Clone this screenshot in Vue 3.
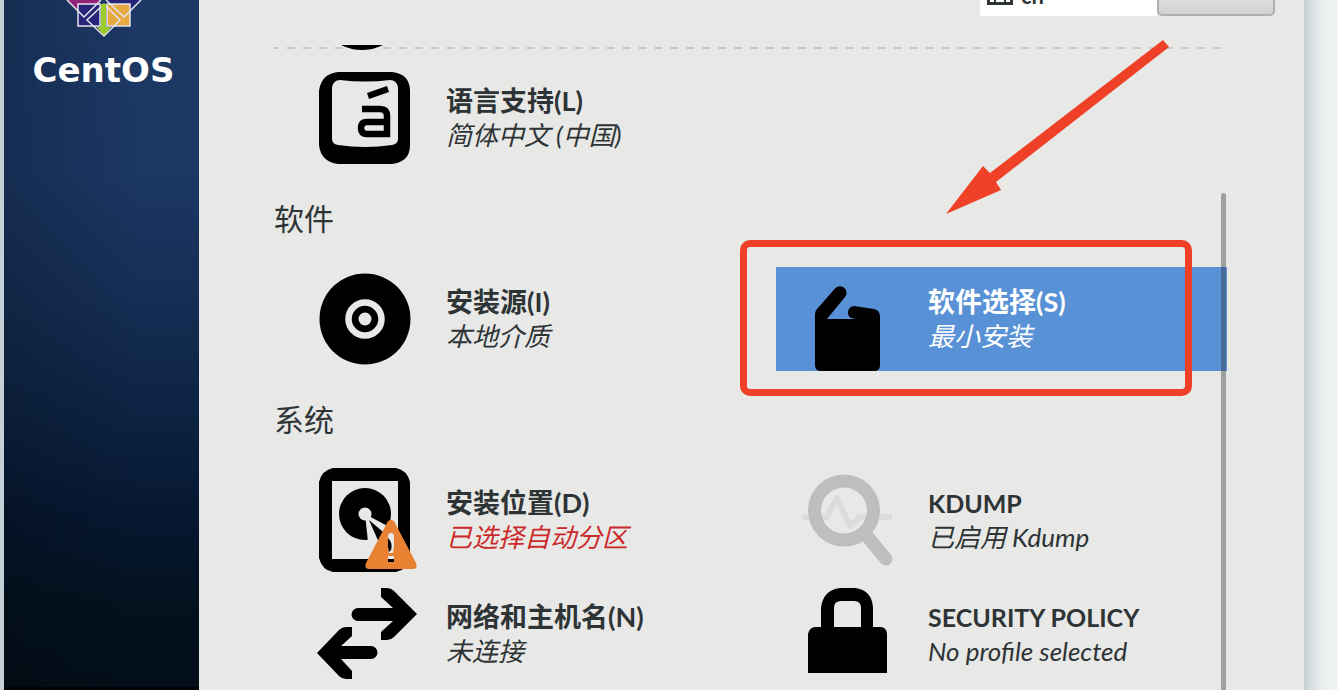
<script setup>
const groups = [
  {
    heading: '',
    items: [{ icon: 'keycap', title: '语言支持(L)', status: '简体中文 (中国)' }],
  },
  {
    heading: '软件',
    items: [
      { icon: 'disc', title: '安装源(I)', status: '本地介质' },
      { icon: 'package', title: '软件选择(S)', status: '最小安装', selected: true },
    ],
  },
  {
    heading: '系统',
    items: [
      { icon: 'disk', title: '安装位置(D)', status: '已选择自动分区', warning: true },
      { icon: 'kdump', title: 'KDUMP', status: '已启用 Kdump', latin: true },
      { icon: 'network', title: '网络和主机名(N)', status: '未连接' },
      { icon: 'lock', title: 'SECURITY POLICY', status: 'No profile selected', latin: true },
    ],
  },
]
</script>

<template>
  <div class="page">
    <aside class="sidebar">
      <svg class="logo" width="76" height="38" viewBox="66 0 76 38" aria-hidden="true">
        <path d="M67 0 84 17 101 0Z" fill="#932279" />
        <path d="M106 0 124 17 141 0Z" fill="#262577" />
        <rect x="78" y="4" width="22" height="22" fill="#262577" />
        <rect x="107" y="4" width="23" height="22" fill="#e6a93f" />
        <path d="M97 27H111L104 36Z" fill="#9ccd2a" />
        <g fill="none" stroke="#e3e3ee" stroke-width="1.5">
          <path d="M67 0 84 17 101 0M106 0 124 17 141 0" />
          <rect x="78" y="4" width="22" height="22" />
          <rect x="107" y="4" width="23" height="22" />
          <path d="M104 4 87 20 104 36 120 20Z" />
        </g>
        <path d="M101 4H106V31H101Z" fill="#9ccd2a" />
      </svg>
      <div class="brand">CentOS</div>
    </aside>

    <main class="main">
      <header class="top">
        <div class="layout-indicator">
          <svg width="26" height="20" viewBox="0 0 26 20" aria-hidden="true">
            <rect x="1.5" y="1.5" width="23" height="17" fill="none" stroke="#2e3436" stroke-width="3" />
            <path d="M5 7H21M5 11H21" stroke="#2e3436" stroke-width="2" stroke-dasharray="3 2" />
            <path d="M8 12V18M18 12V18" stroke="#2e3436" stroke-width="2" />
          </svg>
          <span>cn</span>
        </div>
        <button class="help" type="button" aria-label="帮助"></button>
      </header>

      <div class="hub">
        <hr class="divider" />
        <div class="cut-row">
          <svg width="104" height="92" viewBox="0 0 104 92" aria-hidden="true">
            <circle cx="52" cy="46" r="46" />
          </svg>
        </div>

        <section v-for="g in groups" :key="g.heading">
          <h2 v-if="g.heading">{{ g.heading }}</h2>
          <div class="grid">
            <button
              v-for="it in g.items"
              :key="it.title"
              type="button"
              class="spoke"
              :class="{ selected: it.selected }"
            >
              <svg class="icon" viewBox="0 0 104 104" aria-hidden="true">
                <g v-if="it.icon === 'keycap'">
                  <path
                    fill-rule="evenodd"
                    d="M25 6H79Q97 8 97 25V79Q97 96 79 98H25Q8 96 6 79V25Q8 8 25 6ZM27 14Q20 14 19 22V73Q19 78 25 79Q52 83 79 79Q85 78 85 73V22Q84 14 77 14Q52 17 27 14Z"
                  />
                  <path
                    d="M49 43H67Q74 43 74 50V68H54Q48 68 48 62Q48 56 54 56H74"
                    fill="none"
                    stroke="#000"
                    stroke-width="6.5"
                  />
                  <path d="M54 27 74 20 76 26 56 33Z" />
                </g>
                <g v-else-if="it.icon === 'disc'">
                  <circle cx="52" cy="52" r="45.5" />
                  <circle cx="52" cy="52" r="16.5" fill="none" stroke="#e8e8e6" stroke-width="6.5" />
                  <circle cx="52" cy="52" r="6.5" fill="#e8e8e6" />
                </g>
                <g v-else-if="it.icon === 'package'">
                  <path
                    d="M20 47Q20 44 22 42L40 21.5A6.5 6.5 0 0 1 50 30L32 52H61L56 51A6.5 6.5 0 0 1 59 39L79 42Q85 43 85 50V98Q85 104 79 104H26Q20 104 20 98Z"
                  />
                </g>
                <g v-else-if="it.icon === 'disk'">
                  <path
                    fill-rule="evenodd"
                    d="M20 0H83Q94 2 97 14V90Q94 102 83 104H20Q9 102 6 90V14Q9 2 20 0ZM19 13V91H85V13Z"
                  />
                  <circle cx="52" cy="46" r="26" />
                  <path d="M52 46 55 74 74 76 82 62Z" fill="#e8e8e6" />
                  <path d="M56 52 67 77Q76 86 80 80Q81 74 76 69Z" />
                  <circle cx="52" cy="46" r="6.5" fill="#e8e8e6" />
                  <path d="M78 52Q81 52 82 55L103 95Q105 101 100 101H56Q51 101 53 95L74 55Q75 52 78 52Z" fill="#e98132" />
                  <path d="M75 68Q75 65 78 65T81 68V79L80 85H76L75 79Z" fill="#e8e8e6" />
                  <path d="M75 70Q80 75 78 82L76 84 75 79Z" />
                  <path d="M75 88H81V92H75Z" fill="#e8e8e6" />
                  <path d="M75 91H81V94H75Z" />
                </g>
                <g v-else-if="it.icon === 'kdump'">
                  <path
                    d="M7 49H32L42 30 55 58 65 49H97"
                    fill="none"
                    stroke="#dcdcda"
                    stroke-width="6"
                    stroke-linejoin="round"
                  />
                  <circle cx="49" cy="42.5" r="29.5" fill="none" stroke="#bebebe" stroke-width="13" />
                  <path d="M71 67 91 91" stroke="#bebebe" stroke-width="13" stroke-linecap="round" />
                </g>
                <g v-else-if="it.icon === 'network'">
                  <path
                    d="M68 6H74Q78 6 81 9L104 32 81 55Q78 58 74 58H68V50L80 39H45A6.5 6.5 0 0 1 45 26H80L68 15Z"
                  />
                  <path
                    d="M39 45H33Q29 45 26 48L4 71 26 94Q29 97 33 97H39V89L28 77H58A6.5 6.5 0 0 0 58 64H28L39 54Z"
                  />
                </g>
                <path
                  v-else
                  fill-rule="evenodd"
                  d="M26 45V26Q28 8 45 6H60Q77 8 78 26V45H86Q92 46 92 52V91H13V52Q14 46 20 45ZM39 45H66V26Q66 19 59 19H46Q39 19 39 26Z"
                />
              </svg>
              <span class="label">
                <strong :class="{ latin: it.latin }">{{ it.title }}</strong>
                <em :class="{ warning: it.warning }">{{ it.status }}</em>
              </span>
            </button>
          </div>
        </section>
        <div class="scroll-thumb"></div>
      </div>

      <div class="callout"></div>
      <svg class="arrow" width="224" height="176" viewBox="0 0 224 176" aria-hidden="true">
        <path d="M217 1 223 8 50 143 55 151 0 175 37 127 44 134Z" fill="#ee4128" />
      </svg>
    </main>
  </div>
</template>

<style>
body {
  overflow: hidden;
}
</style>

<style scoped>
.page {
  display: flex;
  height: 100vh;
  padding: 0 34px 0 4px;
  box-sizing: border-box;
  overflow: hidden;
  background: linear-gradient(to left, #f1f3f3 0, #eef1f1 14px, #dbe2e4 25px, #c4d0d5 34px, #c4d0d5 100%);
  font-family: Lato, 'Noto Sans CJK SC', sans-serif;
  color: #2e3436;
}
.sidebar {
  flex: none;
  width: 195px;
  padding-left: 4px;
  box-sizing: border-box;
  display: flex;
  flex-direction: column;
  align-items: center;
  border-bottom: 3px solid #000408;
  background:
    linear-gradient(to right, rgba(0, 0, 0, 0.18), transparent 70%),
    linear-gradient(#1c3864 0, #1b3764 25%, #152e54 43%, #0d2343 60%, #061731 75%, #03121f 88%, #020e19 100%);
}
.logo {
  display: block;
}
.brand {
  font: 700 34px/64px 'DejaVu Sans', sans-serif;
  color: #fff;
}
.main {
  flex: 1;
  position: relative;
  display: flex;
  flex-direction: column;
  min-width: 0;
  padding: 0 77px 0 75px;
  background: #e8e8e6;
}
.top {
  flex: none;
  display: flex;
  justify-content: flex-end;
  align-items: flex-end;
  height: 45px;
  padding-bottom: 29px;
  margin-right: -48px;
  box-sizing: border-box;
}
.layout-indicator {
  display: flex;
  align-items: flex-end;
  gap: 8px;
  width: 177px;
  height: 46px;
  padding: 0 7px 11px;
  box-sizing: border-box;
  background: #fff;
  font-size: 22px;
  font-weight: 700;
  line-height: 18px;
}
.help {
  width: 118px;
  height: 46px;
  border: 2px solid #afafad;
  border-radius: 5px;
  background: linear-gradient(#f0f0ee, #d2d2d0);
}
.hub {
  flex: 1;
  position: relative;
  min-height: 0;
  overflow: hidden;
}
.divider {
  height: 2px;
  margin: 2px -3px -4px;
  border: 0;
  background: linear-gradient(to right, #c9c9c7 8px, transparent 8px) 0 0 / 16px 2px round;
}
.cut-row {
  display: flex;
  align-items: flex-end;
  height: 11px;
  padding: 0 0 6px 36px;
  margin-bottom: 10px;
  box-sizing: border-box;
}
.cut-row svg {
  position: relative;
}
h2 {
  margin: 28px 0 29px;
  font-size: 30px;
  font-weight: 400;
  line-height: 40px;
}
.grid {
  display: grid;
  grid-template-columns: 1fr 1fr;
  gap: 10px 31px;
  margin-left: 20px;
}
.spoke {
  display: flex;
  align-items: center;
  gap: 29px;
  height: 104px;
  padding: 0 0 0 19px;
  border: 0;
  background: none;
  color: inherit;
  font: inherit;
  text-align: left;
}
.spoke.selected {
  background: #5891d5;
  color: #fff;
}
.icon {
  flex: none;
  width: 104px;
  height: 104px;
}
.label {
  display: flex;
  flex-direction: column;
  white-space: nowrap;
  line-height: 34px;
}
.label strong {
  font-size: 27px;
  font-weight: 700;
}
.label .latin {
  font-size: 25px;
}
.label em {
  font-size: 26px;
}
.label .warning {
  color: #cc2a2a;
}
.scroll-thumb {
  position: absolute;
  top: 148px;
  right: 1px;
  bottom: -10px;
  width: 5px;
  border-radius: 3px;
  background: rgba(46, 52, 54, 0.4);
}
.callout {
  position: absolute;
  top: 240px;
  right: 112px;
  width: 452px;
  height: 156px;
  box-sizing: border-box;
  border: 7px solid #ee4128;
  border-radius: 10px;
}
.arrow {
  position: absolute;
  top: 39px;
  right: 134px;
}
</style>
